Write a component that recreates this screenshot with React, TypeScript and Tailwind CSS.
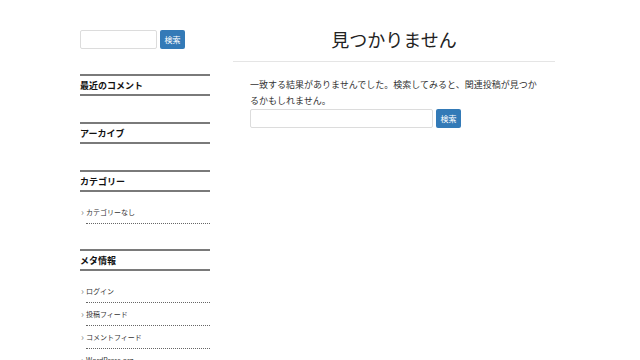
const jp = { fontFamily: '"Noto Sans CJK JP", "Noto Sans", sans-serif' };

function SearchForm({ inputWidth }: { inputWidth: string }) {
  return (
    <div className="flex items-center gap-[3px]">
      <input className={`${inputWidth} h-[19px] rounded-[2px] border border-[#dcdcdc] bg-white`} />
      <button className="h-[19px] w-[25px] rounded-[2px] bg-[#337ab7] text-[8px] leading-[19px] text-white">
        検索
      </button>
    </div>
  );
}

function WidgetTitle({ children }: { children: string }) {
  return (
    <h2 className="flex h-[22px] items-center border-y-2 border-[#7a7a7a] text-[9px] font-bold leading-none text-[#111]">
      {children}
    </h2>
  );
}

function WidgetList({ items }: { items: string[] }) {
  return (
    <ul className="mt-[14px]">
      {items.map((item) => (
        <li key={item} className="flex h-[23px] flex-col">
          <div className="flex h-[12px] items-center text-[7px] leading-none text-[#333]">
            <span className="w-[6px] pl-[1px] text-[10px] font-light text-[#666]">›</span>
            <span>{item}</span>
          </div>
          <div className="ml-[6px] mt-[5px] border-b border-dotted border-[#666]" />
        </li>
      ))}
    </ul>
  );
}

export default function App() {
  return (
    <div className="h-[360px] w-[640px] overflow-hidden bg-white" style={jp}>
      <div className="flex gap-[23px] pl-[80px] pt-[30px]">
        <aside className="w-[130px]">
          <SearchForm inputWidth="w-[77px]" />
          <div className="mt-[25px]">
            <WidgetTitle>最近のコメント</WidgetTitle>
          </div>
          <div className="mt-[26px]">
            <WidgetTitle>アーカイブ</WidgetTitle>
          </div>
          <div className="mt-[26px]">
            <WidgetTitle>カテゴリー</WidgetTitle>
            <WidgetList items={["カテゴリーなし"]} />
          </div>
          <div className="mt-[20px]">
            <WidgetTitle>メタ情報</WidgetTitle>
            <WidgetList items={["ログイン", "投稿フィード", "コメントフィード", "WordPress.org"]} />
          </div>
        </aside>
        <main className="w-[322px]">
          <h1 className="border-b border-[#e5e5e5] pb-[12px] text-center text-[18px] leading-[19px] text-[#222]">
            見つかりません
          </h1>
          <div className="px-[17px] pt-[15px]">
            <p className="w-[292px] text-[9px] leading-[16px] text-[#333]">
              一致する結果がありませんでした。検索してみると、関連投稿が見つかるかもしれません。
            </p>
            <SearchForm inputWidth="w-[183px]" />
          </div>
        </main>
      </div>
    </div>
  );
}
